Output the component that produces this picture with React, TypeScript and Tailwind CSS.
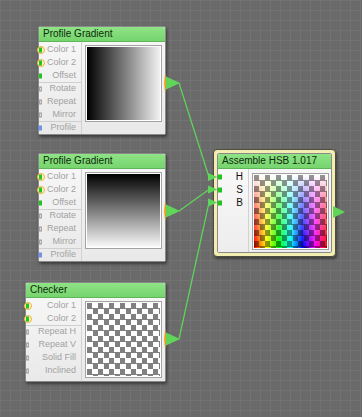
import React from "react";

// Node editor canvas: three generators wired into an Assemble HSB node

type PortKind = "color" | "green" | "gray" | "blue";
type Row = { label: string; port: PortKind; sep?: boolean };

const gradientRows: Row[] = [
  { label: "Color 1", port: "color" },
  { label: "Color 2", port: "color" },
  { label: "Offset", port: "green" },
  { label: "Rotate", port: "gray", sep: true },
  { label: "Repeat", port: "gray" },
  { label: "Mirror", port: "gray" },
  { label: "Profile", port: "blue", sep: true },
];

const checkerRows: Row[] = [
  { label: "Color 1", port: "color" },
  { label: "Color 2", port: "color" },
  { label: "Repeat H", port: "gray", sep: true },
  { label: "Repeat V", port: "gray" },
  { label: "Solid Fill", port: "gray" },
  { label: "Inclined", port: "gray" },
];

function PortMark({ kind }: { kind: PortKind }) {
  if (kind === "color") {
    return (
      <>
        <span className="absolute left-[-2px] top-1/2 h-[8px] w-[8px] -translate-y-1/2 rounded-full border border-[#f2b22c] bg-[#fbf3d6]" />
        <span className="absolute left-0 top-1/2 h-[5px] w-[3px] -translate-y-1/2 bg-[#1fc41f]" />
      </>
    );
  }
  if (kind === "green") {
    return <span className="absolute left-0 top-1/2 h-[5px] w-[3px] -translate-y-1/2 bg-[#1fc41f]" />;
  }
  if (kind === "blue") {
    return <span className="absolute left-0 top-1/2 h-[5px] w-[3px] -translate-y-1/2 bg-[#6f92f2]" />;
  }
  return <span className="absolute left-0 top-1/2 h-[5px] w-[3px] -translate-y-1/2 border border-[#a9a9a9] bg-[#dedede]" />;
}

function Header({ title }: { title: string }) {
  return (
    <div className="h-[15px] shrink-0 rounded-t-[2px] border-b border-[#5fb55a] bg-[linear-gradient(to_bottom,#8fe386,#76d46d)] pl-[4px] text-[10px] leading-[14px] text-[#0d2a0c]">
      {title}
    </div>
  );
}

function Preview({ children }: { children: React.ReactNode }) {
  return (
    <div className="h-[77px] w-[77px] border border-[#a3a3a3] bg-white p-[1px]">{children}</div>
  );
}

function Node({
  pos,
  labelW,
  title,
  rows,
  children,
}: {
  pos: string;
  labelW: string;
  title: string;
  rows: Row[];
  children: React.ReactNode;
}) {
  return (
    <div
      className={`absolute flex flex-col rounded-[2px] border border-[#8a8a8a] bg-[#f2f2f2] shadow-[1px_2px_3px_rgba(0,0,0,0.45)] ${pos}`}
    >
      <Header title={title} />
      <div className="flex flex-1 bg-[linear-gradient(to_bottom,#f6f6f6,#e9e9e9)]">
        <div className={`flex flex-col border-r border-[#d2d2d2] pt-[1px] ${labelW}`}>
          {rows.map((r) => (
            <div
              key={r.label}
              className={`relative flex h-[13px] items-center justify-end pr-[5px] text-[9px] text-[#a2a2a2] ${
                r.sep ? "border-t border-[#cfcfcf]" : ""
              }`}
            >
              <PortMark kind={r.port} />
              {r.label}
            </div>
          ))}
        </div>
        <div className="flex flex-1 justify-center pt-[3px]">{children}</div>
      </div>
    </div>
  );
}

function HsbNode() {
  return (
    <div className="absolute left-[213px] top-[149px] h-[108px] w-[123px] rounded-[4px] border border-[#4d4c40] bg-[#f4edb2] p-[3px] shadow-[1px_2px_3px_rgba(0,0,0,0.45)]">
      <div className="flex h-full flex-col rounded-[2px] border border-[#8a8a8a] bg-[#f2f2f2]">
        <Header title="Assemble HSB 1.017" />
        <div className="flex flex-1 bg-[linear-gradient(to_bottom,#f8f8f8,#ededed)]">
          <div className="flex w-[31px] flex-col border-r border-[#d2d2d2] pt-[1px]">
            {["H", "S", "B"].map((l) => (
              <div key={l} className="relative flex h-[13px] items-center justify-end pr-[5px] text-[10px] text-[#111]">
                <span className="absolute left-0 top-1/2 h-[5px] w-[4px] -translate-y-1/2 bg-[#1fc41f]" />
                {l}
              </div>
            ))}
          </div>
          <div className="flex flex-1 justify-center pt-[4px]">
            <Preview>
              <div className="h-full w-full bg-[linear-gradient(to_right,#f00,#ff0,#0f0,#0ff,#00f,#f0f,#f00)]">
                <div className="h-full w-full bg-[linear-gradient(to_bottom,#fff,rgba(255,255,255,0.55)_35%,rgba(255,255,255,0))]">
                  <div className="h-full w-full bg-[repeating-conic-gradient(from_270deg,rgba(0,0,0,0.42)_0_25%,transparent_0_50%)] bg-size-[11px_11px]" />
                </div>
              </div>
            </Preview>
          </div>
        </div>
      </div>
    </div>
  );
}

function Wires() {
  const green = "#5fd65a";
  return (
    <svg className="pointer-events-none absolute left-0 top-0" width={362} height={417}>
      <defs>
        <linearGradient id="glow" x1="0" y1="0" x2="0" y2="1">
          <stop offset="0" stopColor="#ffb81c" stopOpacity="0" />
          <stop offset="0.5" stopColor="#ff9d12" />
          <stop offset="1" stopColor="#ffb81c" stopOpacity="0" />
        </linearGradient>
      </defs>
      <line x1={179} y1={83} x2={209} y2={177} stroke={green} strokeWidth={1.2} />
      <line x1={179} y1={211} x2={209} y2={189.5} stroke={green} strokeWidth={1.2} />
      <line x1={179} y1={339} x2={209} y2={202.5} stroke={green} strokeWidth={1.2} />
      {[83, 211, 339].map((cy) => (
        <g key={cy}>
          <rect x={164} y={cy - 10} width={2.5} height={20} fill="url(#glow)" />
          <polygon points={`166,${cy - 6.5} 180,${cy} 166,${cy + 6.5}`} fill={green} />
        </g>
      ))}
      {[177, 189.5, 202.5].map((cy) => (
        <polygon key={cy} points={`208,${cy - 4} 217.5,${cy} 208,${cy + 4}`} fill={green} />
      ))}
      <polygon points="333,206 345,212 333,218" fill={green} />
    </svg>
  );
}

export default function App() {
  return (
    <div className="relative h-[417px] w-[362px] overflow-hidden bg-[#6a6a6a] bg-[linear-gradient(#727272_1px,transparent_1px),linear-gradient(90deg,#727272_1px,transparent_1px)] bg-size-[10px_10px] font-['Liberation_Sans',Arial,sans-serif]">
      <Node pos="left-[38px] top-[26px] w-[128px] h-[109px]" labelW="w-[43px]" title="Profile Gradient" rows={gradientRows}>
        <Preview>
          <div className="h-full w-full bg-[linear-gradient(to_right,#000,#f2f2f2)]" />
        </Preview>
      </Node>
      <Node pos="left-[38px] top-[153px] w-[128px] h-[109px]" labelW="w-[43px]" title="Profile Gradient" rows={gradientRows}>
        <Preview>
          <div className="h-full w-full bg-[linear-gradient(to_bottom,#000,#fafafa)]" />
        </Preview>
      </Node>
      <Node pos="left-[25px] top-[282px] w-[141px] h-[100px]" labelW="w-[56px]" title="Checker" rows={checkerRows}>
        <Preview>
          <div className="h-full w-full bg-[repeating-conic-gradient(from_270deg,#808080_0_25%,#fff_0_50%)] bg-size-[11px_11px]" />
        </Preview>
      </Node>
      <HsbNode />
      <Wires />
    </div>
  );
}
